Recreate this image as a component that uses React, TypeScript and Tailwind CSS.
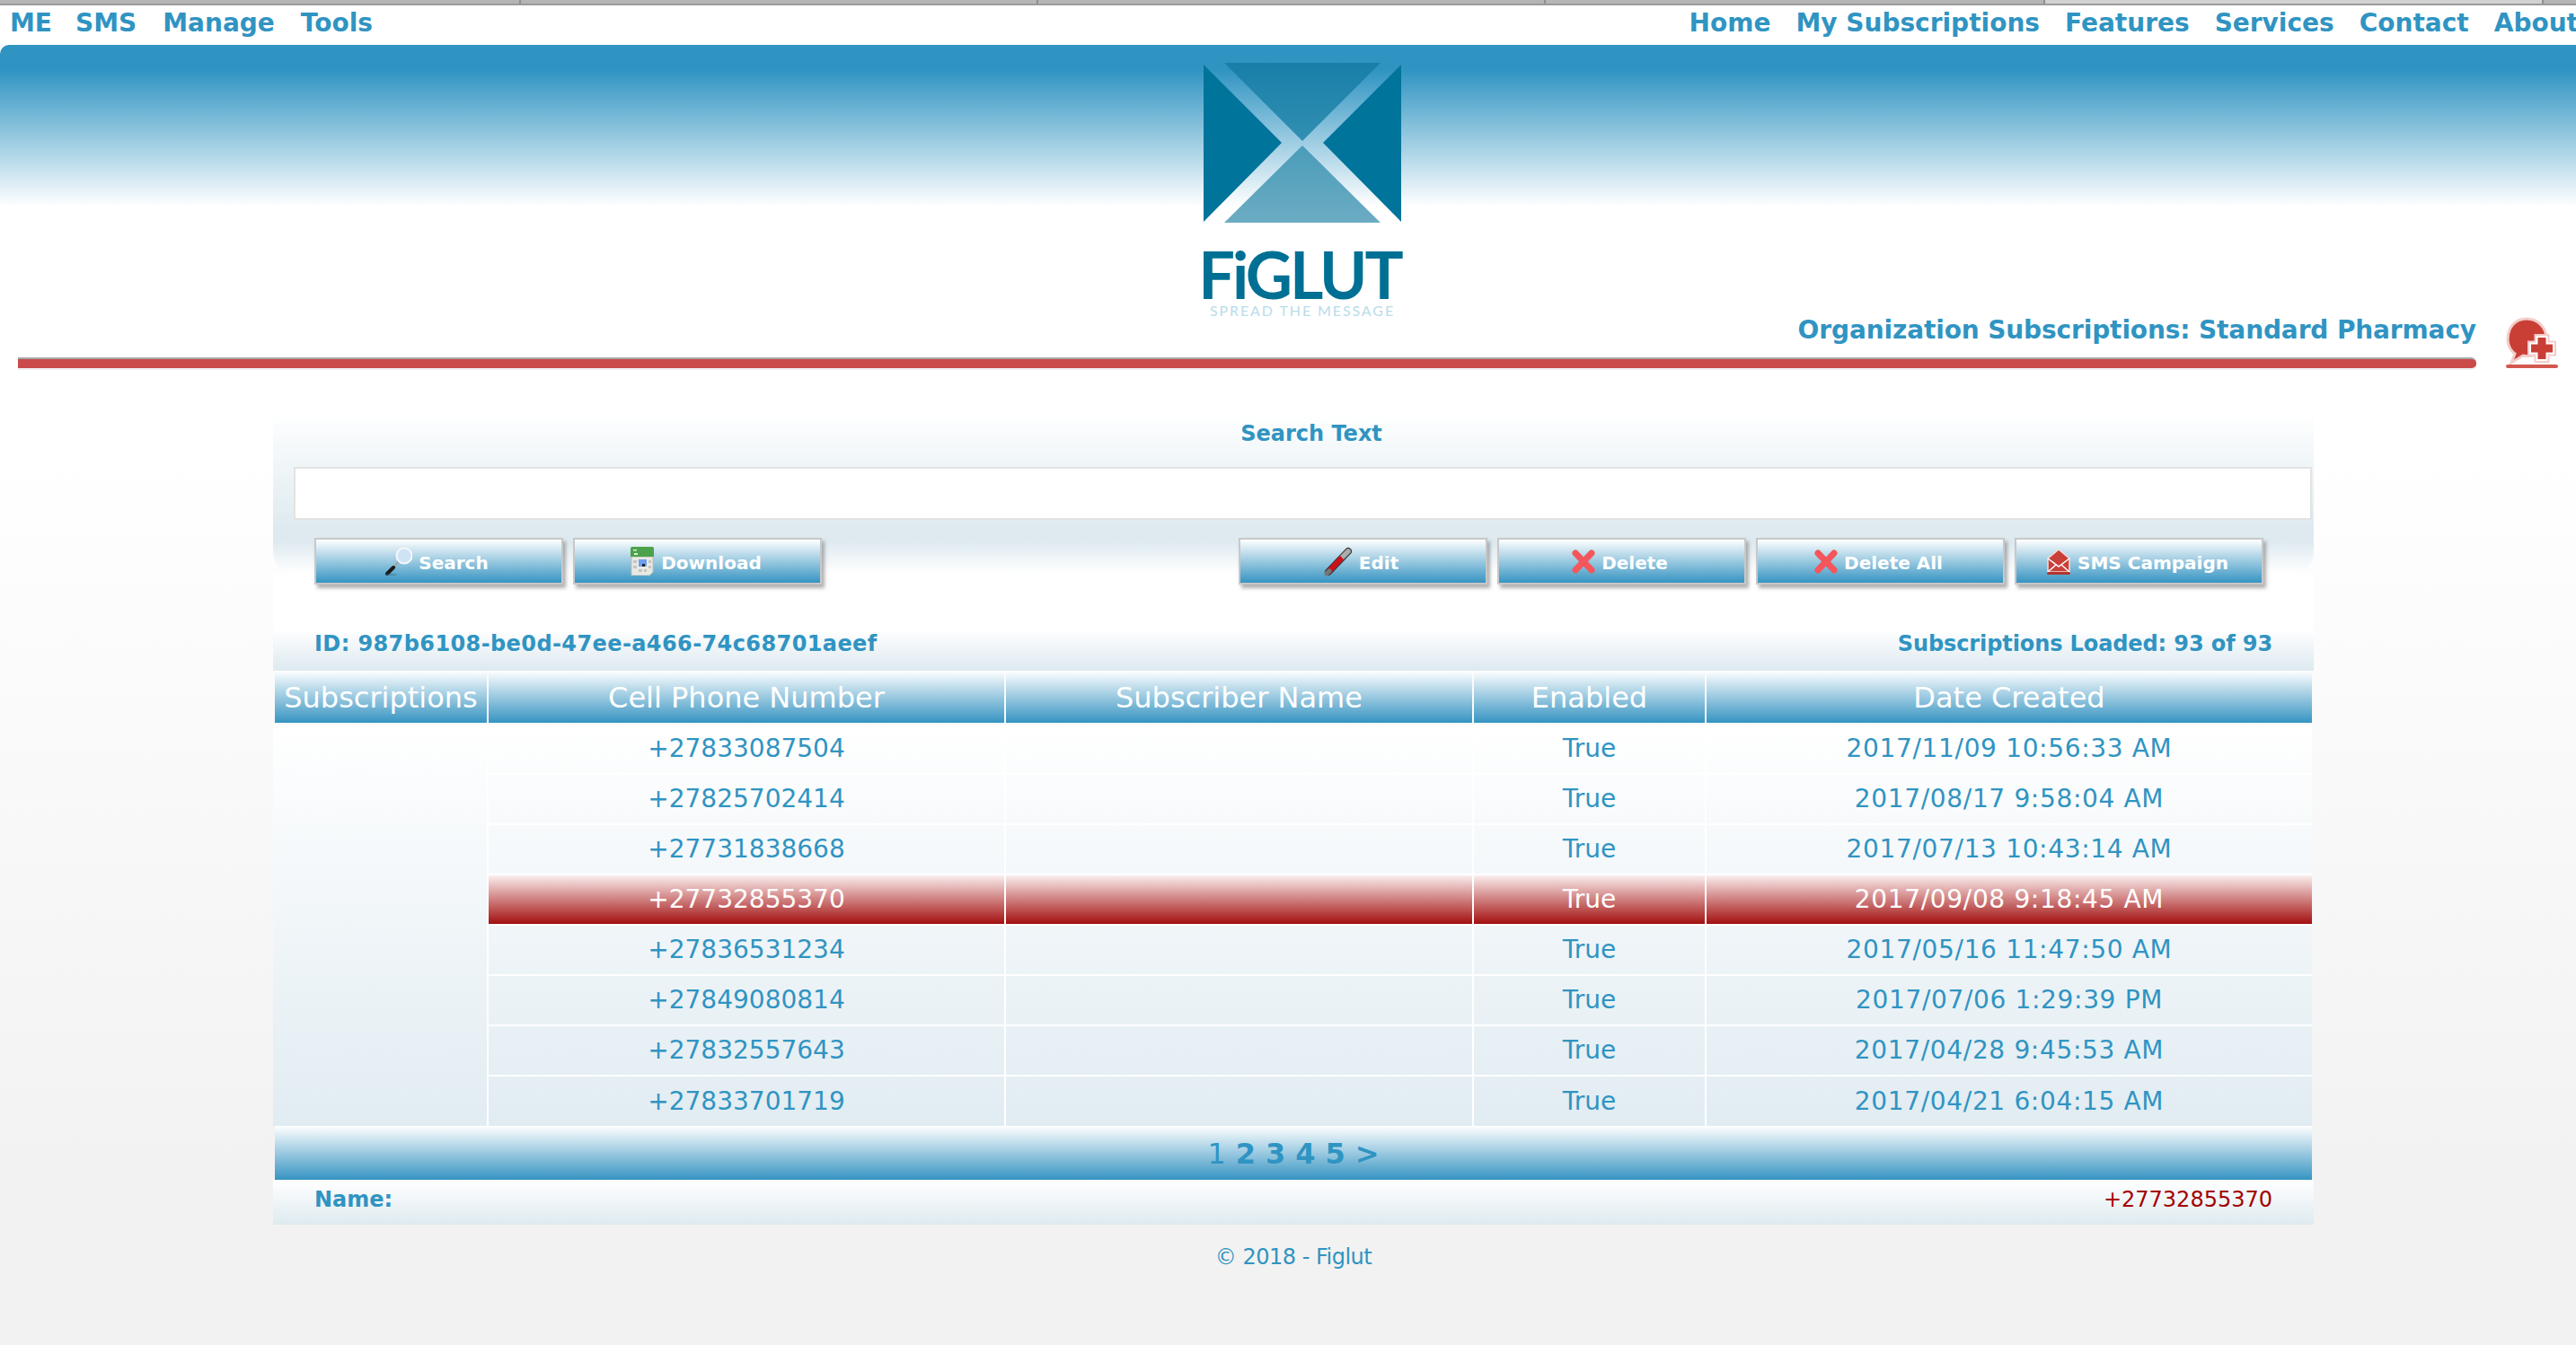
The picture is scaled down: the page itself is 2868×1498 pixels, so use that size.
const LEFT_NAV = ["ME", "SMS", "Manage", "Tools"];
const RIGHT_NAV = ["Home", "My Subscriptions", "Features", "Services", "Contact", "About"];

const ROWS = [
  { phone: "+27833087504", created: "2017/11/09 10:56:33 AM" },
  { phone: "+27825702414", created: "2017/08/17 9:58:04 AM" },
  { phone: "+27731838668", created: "2017/07/13 10:43:14 AM" },
  { phone: "+27732855370", created: "2017/09/08 9:18:45 AM", selected: true },
  { phone: "+27836531234", created: "2017/05/16 11:47:50 AM" },
  { phone: "+27849080814", created: "2017/07/06 1:29:39 PM" },
  { phone: "+27832557643", created: "2017/04/28 9:45:53 AM" },
  { phone: "+27833701719", created: "2017/04/21 6:04:15 AM" },
];

function LogoMark() {
  return (
    <svg width="220" height="178" viewBox="0 0 220 178">
      <defs>
        <linearGradient id="logoTop" x1="0" y1="0" x2="0" y2="1">
          <stop offset="0" stopColor="#187fa9" />
          <stop offset="1" stopColor="#328fb1" />
        </linearGradient>
        <linearGradient id="logoBottom" x1="0" y1="0" x2="0" y2="1">
          <stop offset="0" stopColor="#4a9cb9" />
          <stop offset="1" stopColor="#6cacc3" />
        </linearGradient>
      </defs>
      <polygon points="0,2 87,89 0,177" fill="#00749b" />
      <polygon points="220,2 133,89 220,177" fill="#00749b" />
      <polygon points="23,0 197,0 110,87" fill="url(#logoTop)" />
      <polygon points="23,178 197,178 110,92" fill="url(#logoBottom)" />
    </svg>
  );
}

function ChatPlusIcon() {
  return (
    <svg width="60" height="62" viewBox="0 0 60 62" className="shrink-0">
      <path
        d="M24 3C11 3 3 13 3 26c0 7 3 12 8 16l-4 10 13-8c2 .5 4 .6 6 .6 11 0 20-9 20-20S37 3 24 3Z"
        fill="#c93f36"
        stroke="#f3cdc9"
        strokeWidth="3"
      />
      <path
        d="M36.5 24h9v7.5H53v9h-7.5V48h-9v-7.5H29v-9h7.5Z"
        fill="#c93f36"
        stroke="#f3cdc9"
        strokeWidth="8"
        paintOrder="stroke"
      />
      <path
        d="M36.5 24h9v7.5H53v9h-7.5V48h-9v-7.5H29v-9h7.5Z"
        fill="#c93f36"
        stroke="#fff"
        strokeWidth="4"
        paintOrder="stroke"
      />
      <rect x="1" y="54" width="58" height="4" rx="2" fill="#d4574e" />
    </svg>
  );
}

function MagnifierIcon() {
  return (
    <svg width="30" height="32" viewBox="0 0 30 32">
      <line x1="9" y1="23" x2="15" y2="16" stroke="#9ea6ab" strokeWidth="2.5" />
      <line x1="2" y1="30" x2="9" y2="23" stroke="#1b1b1b" strokeWidth="4" strokeLinecap="round" />
      <circle cx="21" cy="10" r="8.5" fill="#cfe3f7" stroke="#f4f7fa" strokeWidth="2" />
      <ellipse cx="6" cy="31" rx="7" ry="1" fill="#3a6f8d" opacity="0.5" />
    </svg>
  );
}

function CalendarIcon() {
  return (
    <svg width="28" height="32" viewBox="0 0 28 32">
      <path d="M2 11h24v17l-4 4H2Z" fill="#e9e9e4" stroke="#bdbdb8" />
      <path d="M3 0h22a2 2 0 0 1 2 2v9H1V2a2 2 0 0 1 2-2Z" fill="#4ba24a" />
      <rect x="4" y="3" width="4" height="1.5" fill="#d8f0d8" />
      <rect x="5" y="7" width="4" height="2" fill="#d8f0d8" />
      <rect x="10" y="14" width="9" height="8" fill="#6f9ff0" />
      <rect x="14" y="19" width="3" height="3" fill="#222" />
      <g fill="#c6c6c0">
        <rect x="4" y="15" width="4" height="3" />
        <rect x="21" y="15" width="3" height="3" />
        <rect x="4" y="21" width="4" height="3" />
        <rect x="21" y="21" width="3" height="3" />
        <rect x="10" y="25" width="4" height="3" />
        <rect x="16" y="25" width="3" height="3" />
      </g>
    </svg>
  );
}

function PenIcon() {
  return (
    <svg width="32" height="33" viewBox="0 0 32 33">
      <line x1="5" y1="28" x2="27" y2="5" stroke="#3d3d3d" strokeWidth="8" strokeLinecap="round" />
      <line x1="20" y1="12" x2="27" y2="5" stroke="#a9acab" strokeWidth="5.5" strokeLinecap="round" />
      <line x1="5" y1="28" x2="20" y2="12" stroke="#cf1018" strokeWidth="5.5" />
      <line x1="3" y1="30" x2="6" y2="27" stroke="#777" strokeWidth="5" strokeLinecap="round" />
    </svg>
  );
}

function CrossIcon() {
  return (
    <svg width="26" height="27" viewBox="0 0 26 27">
      <path d="M4 4 22 23" stroke="#f4565c" strokeWidth="7" strokeLinecap="round" />
      <path d="M22 4 4 23" stroke="#f4565c" strokeWidth="7" strokeLinecap="round" />
    </svg>
  );
}

function EnvelopeIcon() {
  return (
    <svg width="28" height="29" viewBox="0 0 28 29">
      <path d="M14 1 26 11v15H2V11Z" fill="#c9403a" stroke="#f6dcda" strokeWidth="1.5" />
      <path d="M2 11 14 20 26 11M2 26 11 18M26 26 17 18" fill="none" stroke="#fff" strokeWidth="1.5" />
      <rect x="1" y="26" width="26" height="3" rx="1.5" fill="#b3342e" />
    </svg>
  );
}

function ActionButton({ icon, label }: { icon: React.ReactNode; label: string }) {
  return (
    <button
      type="button"
      className="flex h-[52px] w-[277px] items-center justify-center gap-[7px] border-2 border-[#c8c8c8] bg-[linear-gradient(180deg,#ffffff_0%,#3694c2_100%)] pr-[4px] text-[20px] font-bold text-white shadow-[3px_4px_4px_rgba(110,110,110,0.55)]"
    >
      {icon}
      <span className="pt-1">{label}</span>
    </button>
  );
}

function HeadCell({ children }: { children: React.ReactNode }) {
  return <div className="flex items-center justify-center pt-[2px] whitespace-nowrap">{children}</div>;
}

export default function App() {
  return (
    <div className="min-h-[1498px] w-[2868px] overflow-hidden bg-[linear-gradient(180deg,#ffffff_0,#ffffff_500px,#f2f2f2_1300px)] font-['DejaVu_Sans',Verdana,sans-serif] text-[#3094c2]">
      {/* browser tab strip */}
      <div className="flex h-[6px] border-b-2 border-[#9a9a9a] bg-[#b5b5b5]">
        <div className="w-[580px] border-r-2 border-[#8f8f8f]" />
        <div className="w-[576px] border-r-2 border-[#8f8f8f]" />
        <div className="w-[565px] border-r-2 border-[#8f8f8f]" />
        <div className="w-[556px] border-r-2 border-[#8f8f8f]" />
        <div className="w-[555px] border-r-2 border-[#8f8f8f] bg-[#d2d2d2]" />
      </div>

      <nav className="flex h-[44px] items-center justify-between pb-[5px] pl-[11px] text-[28px] leading-none font-bold whitespace-nowrap">
        <div className="flex gap-[29px]">
          {LEFT_NAV.map((item) => (
            <a key={item} className="first:-mr-[3px]">{item}</a>
          ))}
        </div>
        <div className="-mr-[3px] flex gap-[28px]">
          {RIGHT_NAV.map((item) => (
            <a key={item}>{item}</a>
          ))}
        </div>
      </nav>

      <header className="rounded-tl-[10px] bg-[linear-gradient(180deg,#3094c2_0,#3094c2_28px,#ffffff_180px)] pt-5">
        <div className="flex flex-col items-center pl-[32px]">
          <LogoMark />
          <div className="mt-[26px] h-[62px] pr-[6px] font-['Lato',sans-serif] text-[72px] leading-[62px] font-bold tracking-[-3px] text-[#006f94]">
            FiGLUT
          </div>
          <div className="mt-[4px] h-[12px] font-['Lato',sans-serif] text-[16px] leading-[12px] tracking-[1.9px] whitespace-nowrap text-[#b9dcea]">
            SPREAD THE MESSAGE
          </div>
        </div>
        <div className="flex items-start pl-5">
          <div className="w-[2737px]">
            <div className="h-[46px] text-right text-[28px] leading-[32px] font-bold tracking-[-0.12px] whitespace-nowrap">
              Organization Subscriptions: Standard Pharmacy
            </div>
            <div className="h-[14px] rounded-r-[6px] border-t-2 border-b-2 border-t-[#a8a8a8] border-b-[#f0f0f0] bg-[#cb4a4a]" />
          </div>
          <div className="ml-[32px]">
            <ChatPlusIcon />
          </div>
        </div>
      </header>

      <main className="mt-[45px] ml-[304px] w-[2272px]">
        {/* search block */}
        <section className="h-[180px] rounded-b-[24px] bg-[linear-gradient(180deg,#ffffff_0%,#deeaf0_72%,#deeaf0_80%,#ffffff_100%)]">
          <div className="flex h-[61px] items-start justify-center pt-[6px] pl-[40px] text-[24px] font-bold">Search Text</div>
          <input
            type="text"
            aria-label="Search Text"
            className="ml-[23px] block h-[59px] w-[2247px] border-2 border-[#e3e3e3] bg-white"
          />
          <div className="mt-5 flex justify-between pr-[56px] pl-[46px]">
            <div className="flex gap-[11px]">
              <ActionButton icon={<MagnifierIcon />} label="Search" />
              <ActionButton icon={<CalendarIcon />} label="Download" />
            </div>
            <div className="flex gap-[11px]">
              <ActionButton icon={<PenIcon />} label="Edit" />
              <ActionButton icon={<CrossIcon />} label="Delete" />
              <ActionButton icon={<CrossIcon />} label="Delete All" />
              <ActionButton icon={<EnvelopeIcon />} label="SMS Campaign" />
            </div>
          </div>
        </section>

        {/* id row */}
        <section className="flex h-[108px] items-start justify-between bg-[linear-gradient(180deg,#ffffff_0,#ffffff_62px,#deeaf0_106px)] pt-[62px] pr-[46px] pl-[46px] text-[24px] leading-[32px] font-bold">
          <span className="tracking-[0.4px]">ID: 987b6108-be0d-47ee-a466-74c68701aeef</span>
          <span className="tracking-[-0.1px]">Subscriptions Loaded: 93 of 93</span>
        </section>

        <div className="ml-[2px] grid h-[58px] w-[2268px] grid-cols-[236px_574px_519px_257px_1fr] gap-x-[2px] text-[32px] text-white [&>div]:bg-[linear-gradient(180deg,#ffffff_0%,#3694c2_100%)]">
          <HeadCell>Subscriptions</HeadCell>
          <HeadCell>Cell Phone Number</HeadCell>
          <HeadCell>Subscriber Name</HeadCell>
          <HeadCell>Enabled</HeadCell>
          <HeadCell>Date Created</HeadCell>
        </div>

        <div className="mt-[2px] grid w-[2270px] grid-cols-[238px_576px_521px_259px_676px] grid-rows-[repeat(7,56px)_55px] bg-[linear-gradient(180deg,#ffffff_0%,#e1ecf2_100%)] text-[28px]">
          <div className="row-span-8" />
          {ROWS.map((row, i) => {
            const cell = `flex items-center justify-center border-l-2 border-white ${
              i < ROWS.length - 1 ? "border-b-2" : ""
            } ${row.selected ? "bg-[linear-gradient(180deg,#fbeeee_0%,#a30f0f_100%)] text-white" : ""}`;
            return [
              <div key={`${i}-phone`} className={cell}>{row.phone}</div>,
              <div key={`${i}-name`} className={cell} />,
              <div key={`${i}-enabled`} className={cell}>True</div>,
              <div key={`${i}-created`} className={`${cell} tracking-[0.66px]`}>{row.created}</div>,
            ];
          })}
        </div>

        <div className="ml-[2px] flex h-[60px] w-[2268px] items-center justify-center gap-[11px] bg-[linear-gradient(180deg,#ffffff_0%,#3694c2_100%)] pt-[2px] text-[32px] font-bold">
          <span className="font-normal">1</span>
          <span>2</span>
          <span>3</span>
          <span>4</span>
          <span>5</span>
          <span>&gt;</span>
        </div>

        <div className="flex h-[50px] items-center justify-between bg-[linear-gradient(180deg,#ffffff_0%,#deeaf0_100%)] pr-[46px] pb-[6px] pl-[46px] text-[24px]">
          <span className="font-bold">Name:</span>
          <span className="text-[#a30000]">+27732855370</span>
        </div>
      </main>

      <footer className="mt-[18px] pl-[12px] text-center text-[24px] leading-[36px] tracking-[-0.5px]">© 2018 - Figlut</footer>
    </div>
  );
}
